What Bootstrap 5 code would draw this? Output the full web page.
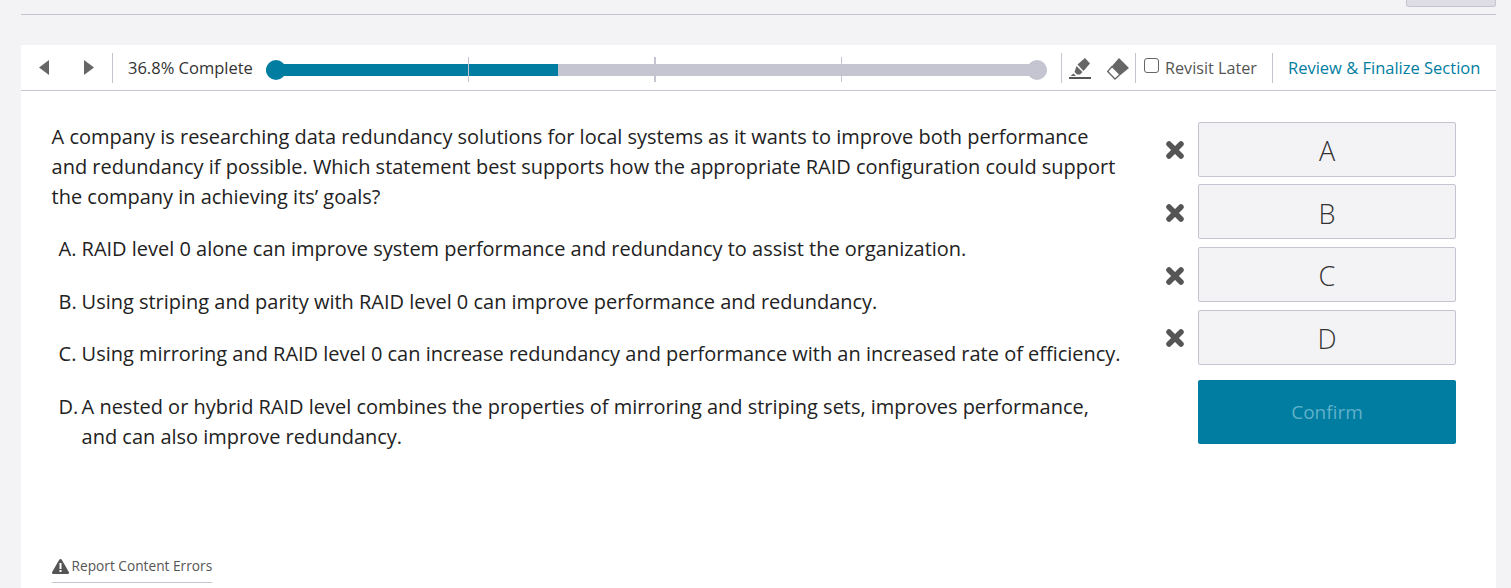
<!DOCTYPE html>
<html lang="en">
<head>
  <meta charset="UTF-8">
  <title>Exam Question</title>
  <link href="https://cdn.jsdelivr.net/npm/bootstrap@5.3.3/dist/css/bootstrap.min.css" rel="stylesheet">
  <style>
    html, body { height: 588px; overflow: hidden; }
    body { background: #f3f3f6; font-family: "Open Sans", "Noto Sans", sans-serif; color: #222; }
    .page-wrap { margin: 0 15px 0 21px; }
    .top-strip { height: 15px; border-bottom: 1px solid #c5c5d2; }
    .top-btn { width: 90px; height: 7px; background: #dddde3; border: 1px solid #c5c5d2; border-top: 0; border-radius: 0 0 3px 3px; }
    .panel { margin-top: 30px; background: #fff; height: 543px; }
    .tool-bar { height: 46px; border-bottom: 1px solid #c5c5d2; font-size: 16.5px; color: #333; }
    .divider { width: 1px; height: 30px; background: #c5c5d2; flex: none; }
    .nav-area { width: 91px; padding-left: 18px; gap: 33px; }
    .pct { width: 138px; margin-left: 15px; white-space: nowrap; margin-top: 1px; }
    .track { position: relative; width: 781px; height: 12px; margin-top: 5px; background: #c5c5d2; border-radius: 6px; flex: none; }
    .track-fill { height: 12px; background: #007da1; border-radius: 6px 0 0 6px; }
    .dot { position: absolute; top: -4px; width: 20px; height: 20px; border-radius: 50%; }
    .dot-start { left: 0; background: #007da1; }
    .dot-end { right: 0; background: #c5c5d2; }
    .tick { position: absolute; top: -7px; width: 1px; height: 25px; background: #c5c5d2; }
    .tick-a { left: 202px; }
    .tick-b { left: 388px; width: 2px; }
    .tick-c { left: 575px; }
    .track-sep { margin-left: 14px; }
    .tool-icons { margin: 3px 0 0 7px; gap: 16px; }
    .tools-sep { margin-left: 6px; }
    .revisit { color: #555; margin: 1px 15px 0 8px; white-space: nowrap; font-size: 16.2px; }
    .check-box { width: 15px; height: 15px; border: 1px solid #666; border-radius: 3px; display: inline-block; margin-right: 6px; position: relative; top: -2px; }
    .review-link { color: #007da1; text-decoration: none; margin: 1px 0 0 15px; white-space: nowrap; }
    .question { width: 1145px; padding: 31px 0 0 30.6px; font-size: 19.98px; line-height: 30px; }
    .question p { margin-bottom: 22px; width: 1075px; }
    .answers { list-style: none; margin: 0; padding: 0 0 0 7px; }
    .answers li { display: flex; margin-bottom: 22.67px; width: 1063px; }
    .answers b { font-weight: 400; width: 23px; flex: none; }
    .picker { width: 290px; padding-top: 30.8px; }
    .pick-row { height: 55px; margin-bottom: 7.67px; }
    .pick-x { width: 32px; flex: none; }
    .pick-x svg { display: block; margin-top: 2px; }
    .pick-btn { width: 258px; height: 55px; background: #f3f3f6; border: 1px solid #c5c5d2; border-radius: 2px; color: #333; font-size: 27px; font-weight: 300; padding: 4px 0 0; }
    .confirm-btn { width: 258px; height: 64px; margin: 15px 0 0 32px; background: #007da1; color: #5fb0c9; border: 0; border-radius: 2px; font-size: 19px; display: block; padding: 0; }
    .report-link { display: inline-flex; align-items: center; gap: 3px; margin-bottom: 5px; padding-bottom: 6px; border-bottom: 1px solid #c5c5d2; color: #555; font-size: 13.7px; line-height: 20px; text-decoration: none; }
  </style>
</head>
<body>
  <div class="page-wrap">
    <div class="top-strip d-flex justify-content-end"><div class="top-btn"></div></div>

    <div class="panel d-flex flex-column">
      <!-- toolbar -->
      <div class="tool-bar d-flex align-items-center">
        <div class="nav-area d-flex align-items-center">
          <svg width="11" height="15" viewBox="0 0 11 15"><path d="M10 0v15L0 7.5z" fill="#666"/></svg>
          <svg width="11" height="15" viewBox="0 0 11 15"><path d="M1 0v15l10-7.5z" fill="#666"/></svg>
        </div>
        <div class="divider"></div>
        <div class="pct">36.8% Complete</div>
        <div class="track">
          <div class="track-fill" style="width: 37.4%"></div>
          <span class="dot dot-start"></span>
          <span class="dot dot-end"></span>
          <span class="tick tick-a"></span>
          <span class="tick tick-b"></span>
          <span class="tick tick-c"></span>
        </div>
        <div class="divider track-sep"></div>
        <div class="d-flex align-items-center tool-icons">
          <svg width="22" height="22" viewBox="0 0 22 22"><path d="M8.500 6.500L16 0l5 5.500-6.500 7.500z" fill="#666"/><path d="M7.500 8l6 6-2.500 2.500H8L5.500 14z" fill="#666"/><path d="M4.500 15.500L7 18H1.500z" fill="#666"/><rect y="19" width="22" height="2" fill="#555"/></svg>
          <svg width="22" height="22" viewBox="0 0 22 22"><path d="M12 0l10 10-8.500 7L5 8z" fill="#666"/><path d="M5 8.500l8 8-5 4.500-7.300-7.500z" fill="#fff" stroke="#666" stroke-width="1.300"/></svg>
        </div>
        <div class="divider tools-sep"></div>
        <div class="revisit d-flex align-items-center"><span class="check-box"></span>Revisit Later</div>
        <div class="divider"></div>
        <a class="review-link" href="#">Review &amp; Finalize Section</a>
      </div>

      <!-- question -->
      <div class="d-flex flex-grow-1">
        <div class="question d-flex flex-column">
          <p>A company is researching data redundancy solutions for local systems as it wants to improve both performance and redundancy if possible. Which statement best supports how the appropriate RAID configuration could support the company in achieving its’ goals?</p>
          <ol class="answers">
            <li><b>A.</b><span>RAID level 0 alone can improve system performance and redundancy to assist the organization.</span></li>
            <li><b>B.</b><span>Using striping and parity with RAID level 0 can improve performance and redundancy.</span></li>
            <li><b>C.</b><span>Using mirroring and RAID level 0 can increase redundancy and performance with an increased rate of efficiency.</span></li>
            <li><b>D.</b><span>A nested or hybrid RAID level combines the properties of mirroring and striping sets, improves performance, and can also improve redundancy.</span></li>
          </ol>
          <div class="mt-auto">
            <a class="report-link" href="#">
              <svg width="17" height="15" viewBox="0 0 17 15"><path d="M8.500 0c.6 0 1 .3 1.300.8l7 12.200c.5.900-.1 2-1.300 2H1.500C.3 15-.3 13.900.2 13L7.200.8c.3-.5.700-.8 1.300-.8z" fill="#555"/><rect x="7.500" y="4" width="2" height="6" fill="#fff"/><rect x="7.500" y="11" width="2" height="2" fill="#fff"/></svg>
              Report Content Errors
            </a>
          </div>
        </div>
        <div class="picker">
          <div class="pick-row d-flex align-items-center">
            <div class="pick-x"><svg width="18" height="18" viewBox="0 0 18 18"><path d="M3 3l12 12M15 3L3 15" stroke="#555" stroke-width="5.500" stroke-linecap="round"/></svg></div>
            <button class="pick-btn" type="button">A</button>
          </div>
          <div class="pick-row d-flex align-items-center">
            <div class="pick-x"><svg width="18" height="18" viewBox="0 0 18 18"><path d="M3 3l12 12M15 3L3 15" stroke="#555" stroke-width="5.500" stroke-linecap="round"/></svg></div>
            <button class="pick-btn" type="button">B</button>
          </div>
          <div class="pick-row d-flex align-items-center">
            <div class="pick-x"><svg width="18" height="18" viewBox="0 0 18 18"><path d="M3 3l12 12M15 3L3 15" stroke="#555" stroke-width="5.500" stroke-linecap="round"/></svg></div>
            <button class="pick-btn" type="button">C</button>
          </div>
          <div class="pick-row d-flex align-items-center">
            <div class="pick-x"><svg width="18" height="18" viewBox="0 0 18 18"><path d="M3 3l12 12M15 3L3 15" stroke="#555" stroke-width="5.500" stroke-linecap="round"/></svg></div>
            <button class="pick-btn" type="button">D</button>
          </div>
          <button class="confirm-btn" type="button">Confirm</button>
        </div>
      </div>
    </div>
  </div>
</body>
</html>
